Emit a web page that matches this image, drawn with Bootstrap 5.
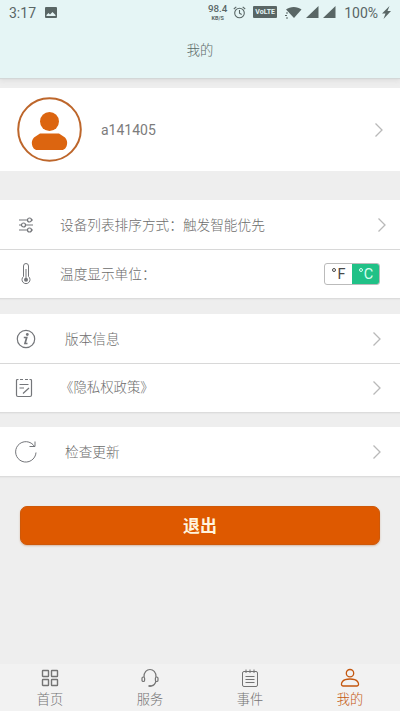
<!DOCTYPE html>
<html lang="zh-CN">
<head>
<meta charset="utf-8">
<meta name="viewport" content="width=device-width, initial-scale=1">
<title>我的</title>
<link href="https://cdn.jsdelivr.net/npm/bootstrap@5.3.0/dist/css/bootstrap.min.css" rel="stylesheet">
<style>
body{font-family:Roboto,"Noto Sans CJK SC",sans-serif;background:#eee;color:#6c6c6c;font-size:13.67px;line-height:20px;font-weight:300;overflow:hidden}
.screen{height:711px}
svg{display:block;flex:none;fill:none;stroke:currentColor}
.top{height:78px;background:#e5f5f5;box-shadow:0 1px 1px #d3d7d7,0 3px 5px #dedede;color:#596665}
.status{height:24px;padding:0 9px}
.clock{width:36px;margin-top:1px;font-weight:400;font-size:14px}
.speed{width:21px;height:19px;white-space:nowrap}
.speed span{font-size:9.8px;line-height:12px;font-weight:500}
.speed small{font-size:5.5px;line-height:7px;font-weight:700}
.alarm{margin:0 7px 0 5px}
.volte{width:24px;height:12px;background:#596665;color:#e5f5f5;font-size:7px;line-height:12px;font-weight:700;border-radius:1px}
.percent{font-size:14px;font-weight:400;margin-top:1px}
.title{height:54px;font-size:13.3px;color:#5b6967}
.profile{height:83px;margin-top:10px;padding:0 16px 0 17px}
.username{font-size:14px;letter-spacing:0;margin-left:19px;font-weight:400;color:#7c7c7c}
.group-box{border-bottom:1px solid #dcdcdc;box-shadow:0 1px 1px #e7e7e7}
.settings{margin-top:29px}
.about{margin-top:15px}
.update{margin-top:14px}
.line{height:49px;padding:0 18px 0 15px}
.line+.line{border-top:1px solid #d8d8d8}
.sorting{padding-right:13px}
.ico{width:22px;height:24px;color:#74767a}
.label-a{margin-left:23px}
.label-b{margin-left:28px}
.label-c{margin-left:23px;font-size:13.4px}
.chev{color:#b9b9b9}
.units{width:56px;height:22px;margin-right:2px;border:1px solid #bbb;border-radius:3px;overflow:hidden;font-size:14.5px;line-height:22px;color:#484848;font-weight:400}
.units .on{background:#20c187;color:#d7fff0}
.units span{position:relative;padding-left:6px}
.units i{position:absolute;left:7px;top:4px;width:4px;height:4px;border:1px solid currentColor;border-radius:50%}
.exit{height:39px;margin:29px 20px 0;background:#de5900;border:1px solid #ce5909;border-radius:7px;color:#fff4dd;font-weight:700;font-size:17px;line-height:20px;box-shadow:0 1px 2px #d6b8a4}
.tabs{height:47px;background:#f2f2f2;color:#747474;font-size:13.2px;line-height:18px}
.tabs a{color:inherit}
.tabs a.current{color:#c4570f}
</style>
<script src="https://cdn.jsdelivr.net/npm/bootstrap@5.3.0/dist/js/bootstrap.bundle.min.js"></script>
</head>
<body>
<div class="screen d-flex flex-column">
  <header class="top flex-shrink-0">
    <div class="status d-flex align-items-center">
      <span class="clock">3:17</span>
      <svg width="12" height="11" viewBox="0 0 12 11"><rect width="12" height="11" rx="1" fill="currentColor" stroke="none"/><path d="M1.500 9V8l2-2 1.500 1.500L7.500 5l3 3v1z" fill="#e5f5f5" stroke="none"/></svg>
      <div class="speed ms-auto d-flex flex-column align-items-center"><span>98.4</span><small>KB/S</small></div>
      <svg class="alarm" width="13" height="13" viewBox="0 0 13 13" stroke-width="1.100"><circle cx="6.500" cy="7" r="4.800"/><path d="M6.500 4v3.200l2.200 1.300M.8 3 3.300.9M12.200 3 9.700.9"/></svg>
      <span class="volte text-center">VoLTE</span>
      <svg class="ms-2" width="17" height="13" viewBox="0 0 17 13"><path d="M1 3.500C5 0 12.500 0 16.500 3.500L9 12z" fill="currentColor" stroke="none"/><path d="M0 7.500h3.500M0 10.500h4" stroke="#e5f5f5" stroke-width="2"/><path d="M1 7h2M0 9.500h2M1 12h2"/></svg>
      <svg class="ms-1" width="30" height="12" viewBox="0 0 30 12"><path d="M12.500 0v12H0zM29.500 0v12H17z" fill="currentColor" stroke="none"/></svg>
      <span class="percent ms-2">100%</span>
      <svg class="ms-1" width="9" height="13" viewBox="0 0 9 13"><path d="M7.500 0 0 7.500h3.500L1.500 13 9 5H5.500z" fill="currentColor" stroke="none"/></svg>
    </div>
    <div class="title d-flex align-items-center justify-content-center">我的</div>
  </header>

  <section class="profile bg-white d-flex align-items-center flex-shrink-0">
    <svg width="65" height="65" viewBox="0 0 65 65"><circle cx="32.500" cy="32.500" r="31.300" stroke="#bd662b" stroke-width="2"/><g fill="#dc6510" stroke="none"><circle cx="32.500" cy="24.500" r="9.500"/><path d="M23 36.500h19l6 4c2 2 2.500 5 2 7-.5 3-2.500 5.500-5 5.500H20c-2.500 0-4.500-2.500-5-5.500-.5-2 0-5 2-7z"/></g></svg>
    <span class="username">a141405</span>
    <svg class="chev ms-auto" width="10" height="16" viewBox="0 0 10 16" stroke-width="1.300"><path d="m1.500 1.500 6.500 6.500-6.500 6.500"/></svg>
  </section>

  <section class="group-box settings bg-white flex-shrink-0">
    <div class="line sorting d-flex align-items-center">
      <div class="ico d-flex align-items-center justify-content-center"><svg width="16" height="16" viewBox="0 0 16 16" stroke-width="1.200"><path d="M1 3h8.500m4 0H15M1 8h2.500m4 0H15M1 13h8.500m4 0H15"/><circle cx="11.500" cy="3" r="2"/><circle cx="5.500" cy="8" r="2"/><circle cx="11.500" cy="13" r="2"/></svg></div>
      <span class="label-a">设备列表排序方式：触发智能优先</span>
      <svg class="chev ms-auto" width="10" height="16" viewBox="0 0 10 16" stroke-width="1.300"><path d="m1.500 1.500 6.500 6.500-6.500 6.500"/></svg>
    </div>
    <div class="line d-flex align-items-center">
      <div class="ico d-flex align-items-center justify-content-center"><svg width="10" height="22" viewBox="0 0 10 22"><path d="M2.500 13.500V3a2.500 2.500 0 0 1 5 0v10.500a4 4 0 1 1-5 0z"/><path d="M5 6v9"/><circle cx="5" cy="16.800" r="2" fill="currentColor" stroke="none"/></svg></div>
      <span class="label-a">温度显示单位：</span>
      <div class="units ms-auto d-flex text-center"><span class="w-50"><i></i>F</span><span class="w-50 on"><i></i>C</span></div>
    </div>
  </section>

  <section class="group-box about bg-white flex-shrink-0">
    <div class="line d-flex align-items-center">
      <div class="ico d-flex align-items-center justify-content-center"><svg width="20" height="20" viewBox="0 0 20 20" stroke-width="1.200"><circle cx="10" cy="10" r="8.700"/><circle cx="11.300" cy="5.500" r="1.400" fill="currentColor" stroke="none"/><path d="M7.800 8.500h2.900L9 14.500h2.500" stroke-width="1.700"/></svg></div>
      <span class="label-b">版本信息</span>
      <svg class="chev ms-auto" width="10" height="16" viewBox="0 0 10 16" stroke-width="1.300"><path d="m1.500 1.500 6.500 6.500-6.500 6.500"/></svg>
    </div>
    <div class="line d-flex align-items-center">
      <div class="ico d-flex align-items-center"><svg width="18" height="20" viewBox="0 0 18 20" stroke-width="1.200"><path d="M3.500 1.500h-1q-1 0-1 1V17q0 1.500 1.500 1.500h12q1.500 0 1.500-1.500V2.500q0-1-1-1h-1M5 1.500h3m2 0h3M4.500 6.500h9M4.500 10H9M8 15.500l6-5.500"/></svg></div>
      <span class="label-c">《隐私权政策》</span>
      <svg class="chev ms-auto" width="10" height="16" viewBox="0 0 10 16" stroke-width="1.300"><path d="m1.500 1.500 6.500 6.500-6.500 6.500"/></svg>
    </div>
  </section>

  <section class="group-box update bg-white flex-shrink-0">
    <div class="line d-flex align-items-center">
      <div class="ico d-flex align-items-center justify-content-center"><svg width="22" height="22" viewBox="0 0 22 22"><path d="M21 11.500A10.200 10.200 0 1 1 19.500 5.500M20 .5v5h-5.500"/></svg></div>
      <span class="label-b">检查更新</span>
      <svg class="chev ms-auto" width="10" height="16" viewBox="0 0 10 16" stroke-width="1.300"><path d="m1.500 1.500 6.500 6.500-6.500 6.500"/></svg>
    </div>
  </section>

  <button class="btn exit p-0 flex-shrink-0">退出</button>

  <nav class="tabs mt-auto d-flex text-center flex-shrink-0">
    <a class="w-25 text-decoration-none d-flex flex-column align-items-center pt-1"><svg width="18" height="19" viewBox="0 0 18 19" stroke-width="1.400"><rect x="1.500" y="2.500" width="6" height="6" rx=".5"/><rect x="10.500" y="2.500" width="6" height="6" rx=".5"/><rect x="1.500" y="11.500" width="6" height="6" rx=".5"/><rect x="10.500" y="11.500" width="6" height="6" rx=".5"/></svg><span class="mt-1">首页</span></a>
    <a class="w-25 text-decoration-none d-flex flex-column align-items-center pt-1"><svg width="18" height="19" viewBox="0 0 18 19" stroke-width="1.200"><path d="M3 9C2.500-1 15.500-1 15 9M15 13q-1 4.500-5 5"/><rect x="1" y="9" width="2.600" height="4.500" rx="1.300"/><rect x="14.400" y="9" width="2.600" height="4.500" rx="1.300"/><path d="M7.500 18h3" stroke-width="1.800"/></svg><span class="mt-1">服务</span></a>
    <a class="w-25 text-decoration-none d-flex flex-column align-items-center pt-1"><svg width="18" height="19" viewBox="0 0 18 19"><rect x="1.500" y="3.500" width="15" height="15" rx="1.500"/><path d="M5 1.500v3.500M9 1.500v3.500M13 1.500v3.500M4.500 8.500h9M4.500 11.500h9M4.500 14.500h9"/></svg><span class="mt-1">事件</span></a>
    <a class="current w-25 text-decoration-none d-flex flex-column align-items-center pt-1"><svg width="20" height="19" viewBox="0 0 20 19" stroke-width="1.300"><circle cx="10" cy="5.200" r="3.700"/><path d="M3 18c-2-.3-2-2.500-.5-4.500 1.500-2 3.500-2.500 7.500-2.500s6 .5 7.500 2.500c1.500 2 1.500 4.200-.5 4.500z"/></svg><span class="mt-1">我的</span></a>
  </nav>
</div>
</body>
</html>
